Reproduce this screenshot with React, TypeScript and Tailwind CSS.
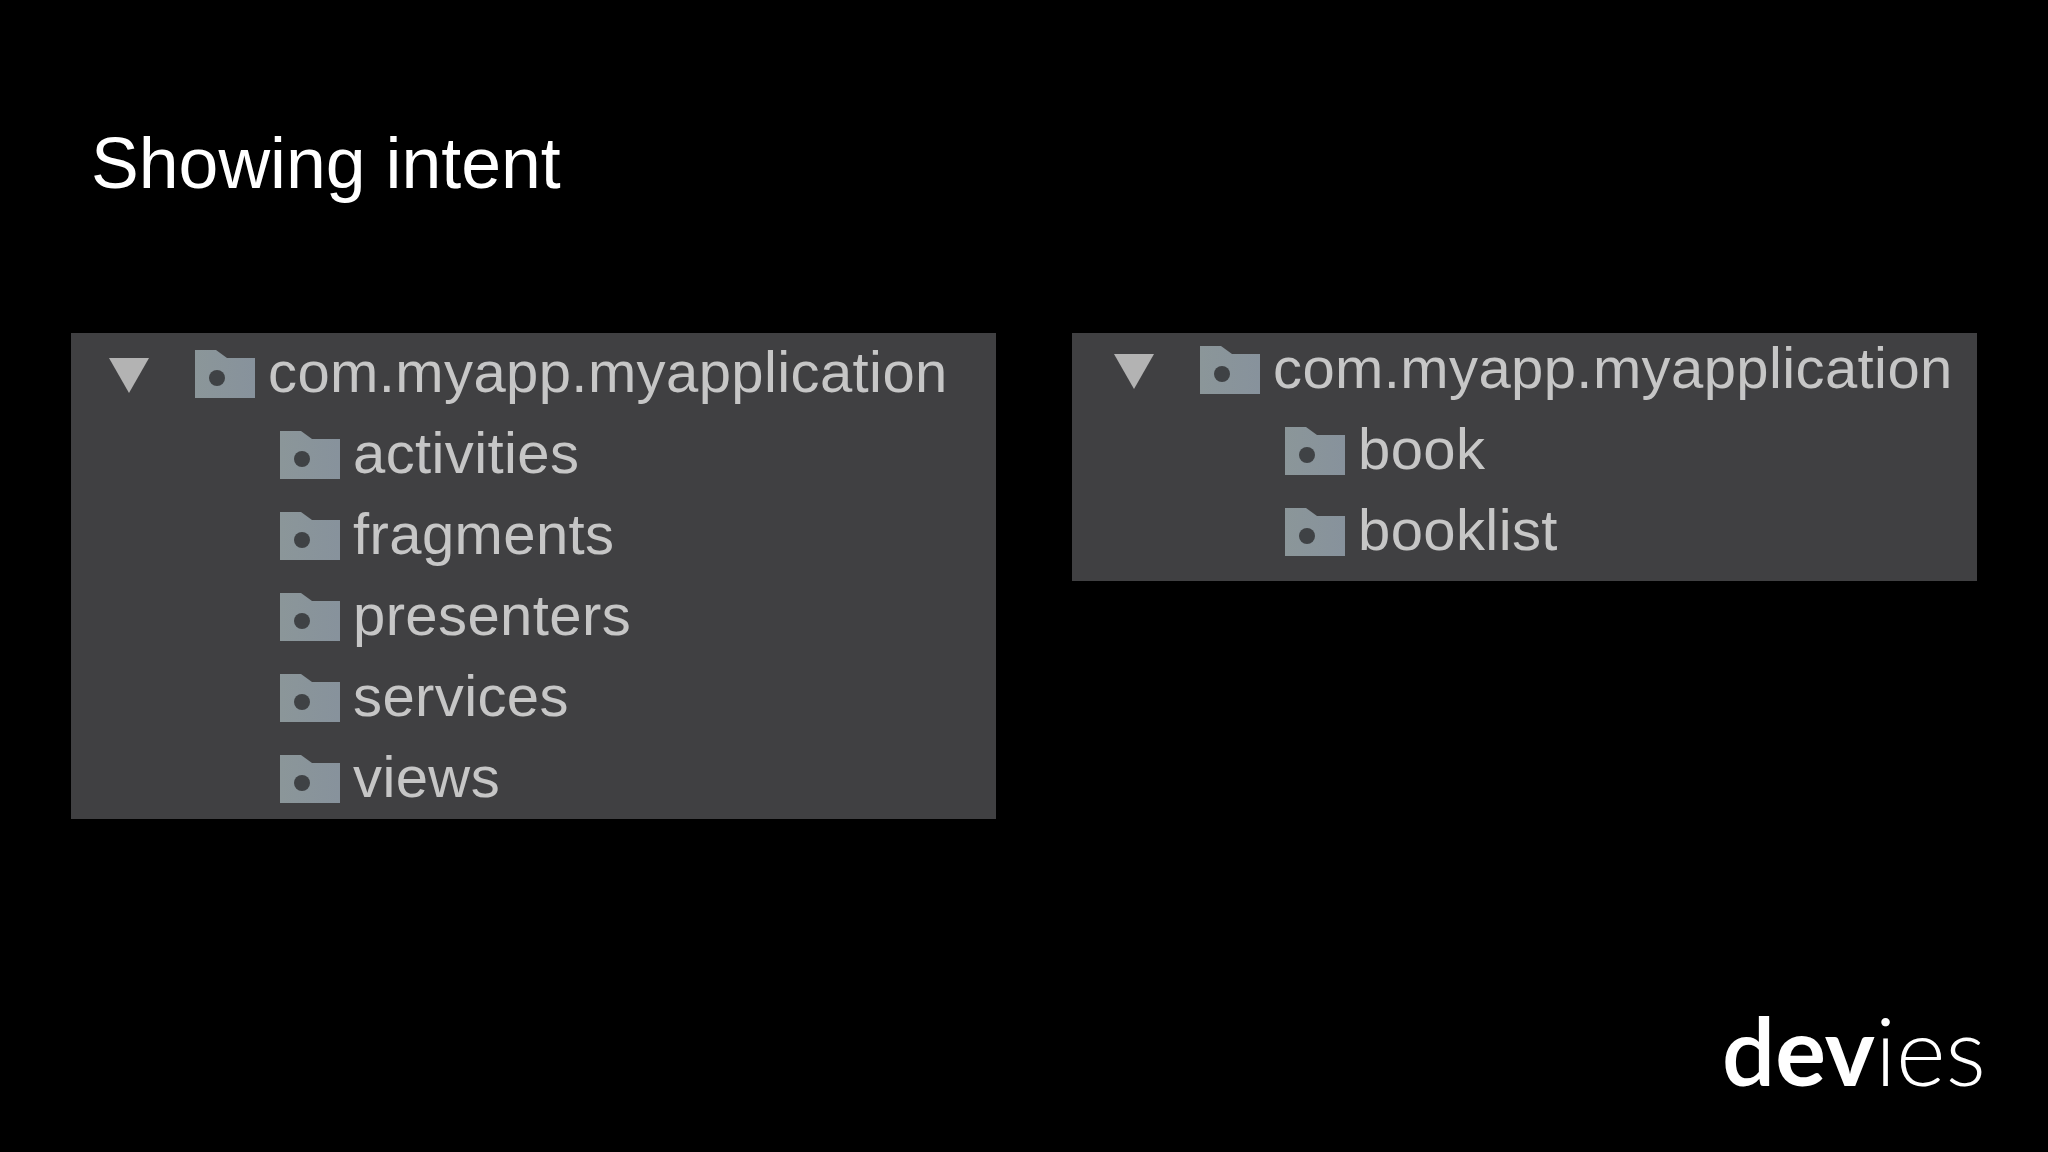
const FolderIcon = ({ id }: { id: string }) => {
  return (
    <svg className="w-[60px] h-[48px] shrink-0" viewBox="0 0 60 48" aria-hidden="true">
      <defs>
        <linearGradient id={id} x1="0" y1="0" x2="1" y2="0">
          <stop offset="0" stopColor="#8b9699" />
          <stop offset="1" stopColor="#87929c" />
        </linearGradient>
      </defs>
      <path d="M0 0H21L32 8H60V48H0Z" fill={`url(#${id})`} />
      <circle cx="22" cy="28" r="8" fill="#3f4245" />
    </svg>
  );
};

const Triangle = () => {
  return (
    <svg className="w-[40px] h-[35px] shrink-0 mt-[4px]" viewBox="0 0 40 35" aria-hidden="true">
      <path d="M0 0H40L20 35Z" fill="#b3b3b3" />
    </svg>
  );
};

const FolderRow = ({ id, label }: { id: string; label: string }) => {
  return (
    <div className="flex items-center h-[81px] gap-[13px]">
      <FolderIcon id={id} />
      <span className="text-[58px] leading-none tracking-[0.4px] text-[#c6c6c6] blur-[0.7px] -mt-[3px]">{label}</span>
    </div>
  );
};

const PackagePanel = ({ name, folders, className, rowsClassName }: { name: string; folders: string[]; className: string; rowsClassName: string }) => {
  return (
    <div className={`bg-[#404042] ${className}`}>
      <div className={rowsClassName}>
        <div className="flex items-center">
          <Triangle />
          <div className="ml-[46px]">
            <FolderRow id={`${name}-root`} label="com.myapp.myapplication" />
          </div>
        </div>
        <div className="ml-[171px]">
          {folders.map((folder) => (
            <FolderRow key={folder} id={`${name}-${folder}`} label={folder} />
          ))}
        </div>
      </div>
    </div>
  );
};

export default function App() {
  return (
    <div className="w-[2048px] h-[1152px] overflow-hidden bg-black flex flex-col font-['Liberation_Sans',sans-serif]">
      <h1 className="ml-[91px] mt-[123px] h-[210px] text-[71.6px] leading-[80px] font-normal text-white">Showing intent</h1>
      <div className="flex items-start pl-[71px] gap-[76px]">
        <PackagePanel name="left" className="w-[925px] h-[486px] pl-[38px]" rowsClassName="" folders={["activities", "fragments", "presenters", "services", "views"]} />
        <PackagePanel name="right" className="w-[905px] h-[248px] pl-[42px]" rowsClassName="-mt-[4px]" folders={["book", "booklist"]} />
      </div>
      <div className="mt-auto flex justify-end pr-[62px] pb-[55px] font-['Lato',sans-serif] text-[95px] leading-none text-white">
        <span className="font-semibold">d</span>
        <span className="font-bold">ev</span>
        <span className="font-light">ies</span>
      </div>
    </div>
  );
}
